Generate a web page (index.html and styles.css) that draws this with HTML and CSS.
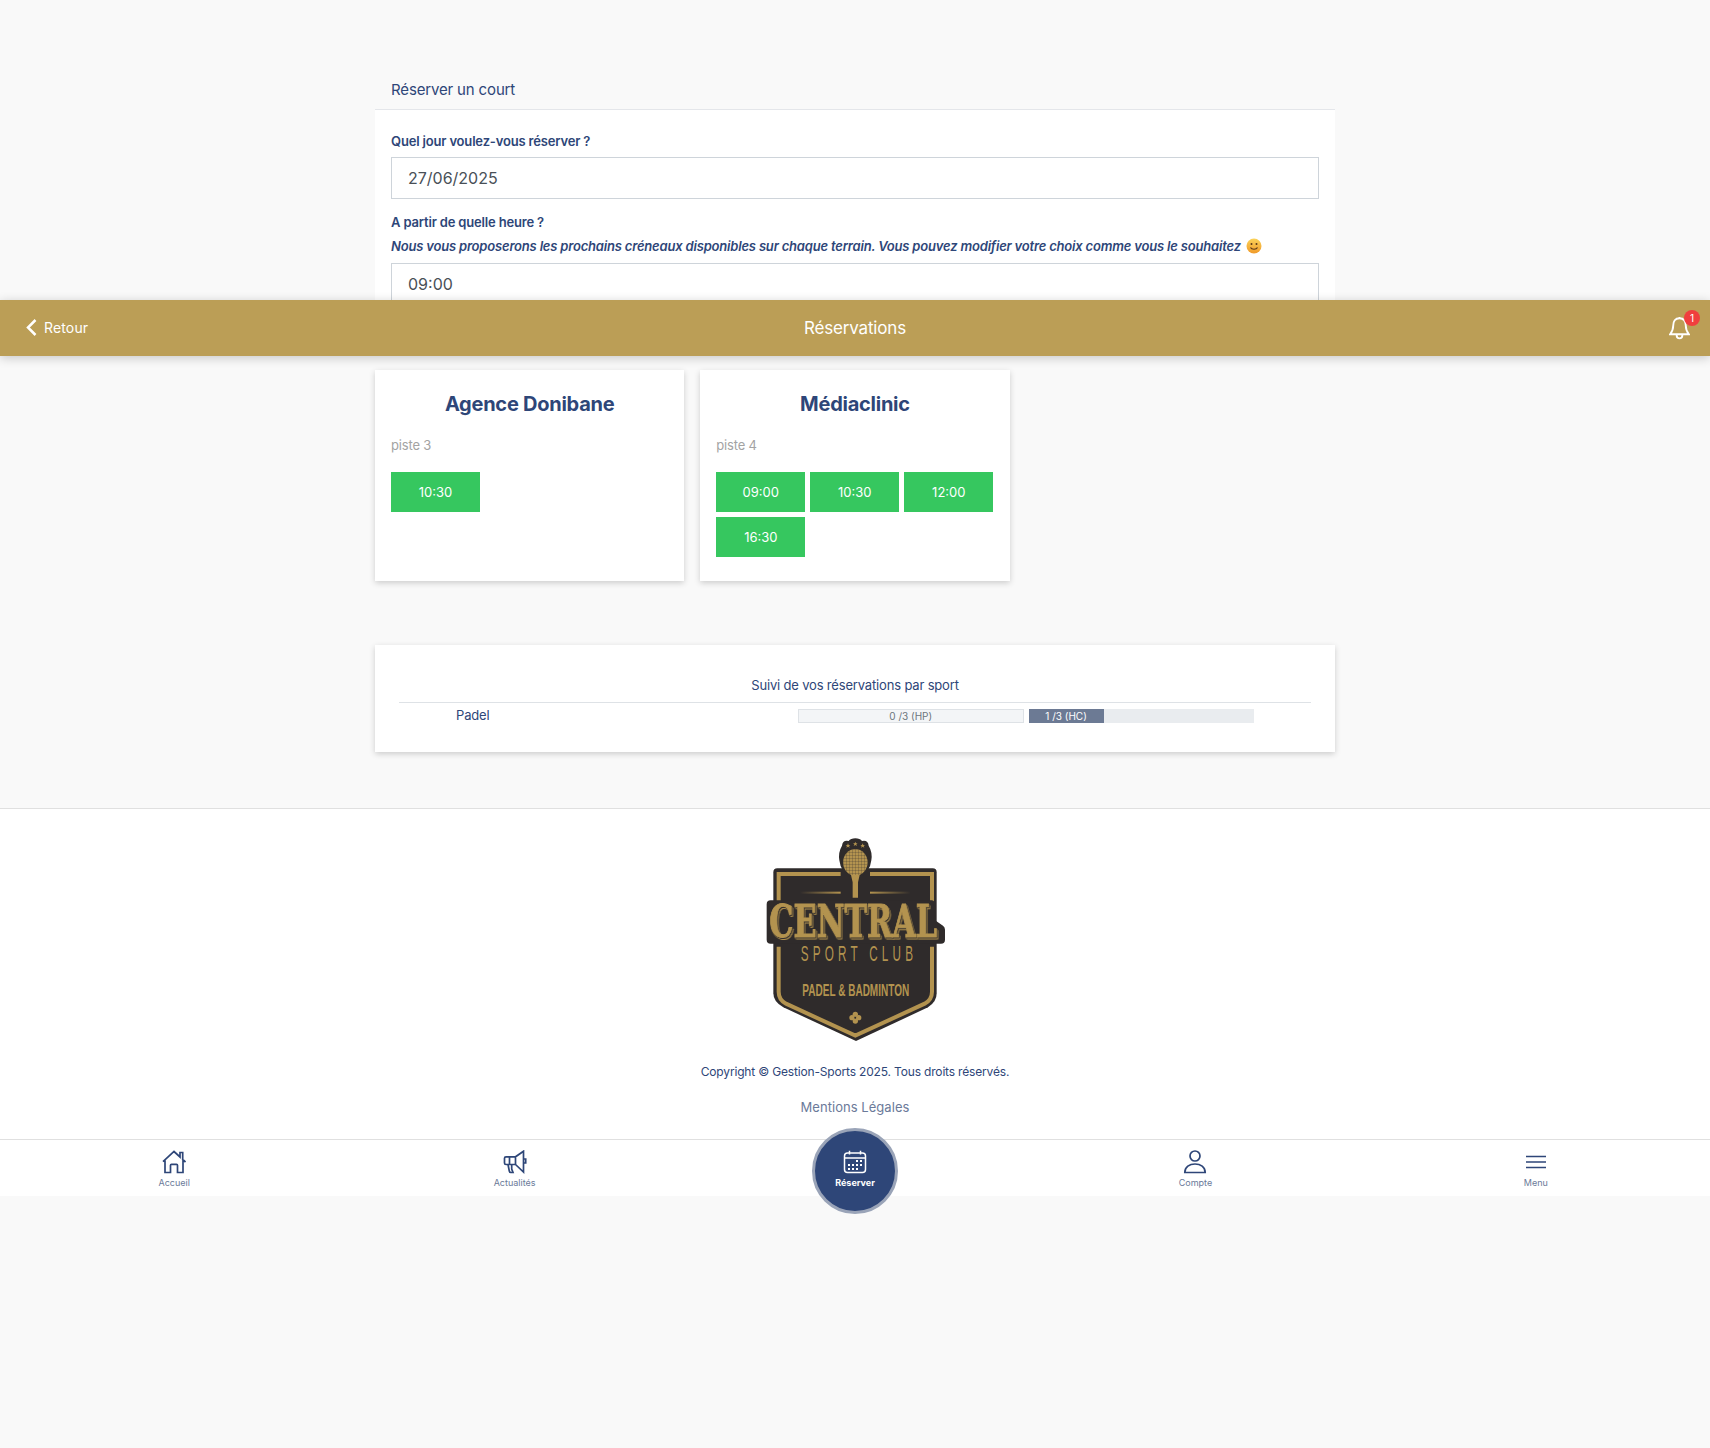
FILE: index.html
```html
<!DOCTYPE html>
<html lang="fr">
<head>
<meta charset="utf-8">
<title>Réservations</title>
<link rel="stylesheet" href="styles.css">
</head>
<body>
<header class="topbar">
  <a class="back"><svg class="chevron" viewBox="0 0 11 17"><path d="M9.500 1 2 8.500 9.500 16"/></svg><span>Retour</span></a>
  <div class="topbar-title">Réservations</div>
  <div class="bell">
    <svg class="bell-icon" viewBox="0 0 20 23"><path d="M10 2.200C5.800 2.200 4 5.200 4 9.200c0 3.800-1 5.900-3 8.300h18c-2-2.400-3-4.500-3-8.300 0-4-1.800-7-6-7ZM10 1v1.200M7.300 17.500v1.300a2.700 2.700 0 0 0 5.400 0v-1.300"/></svg>
    <span class="badge">1</span>
  </div>
</header>

<main class="container">
  <section class="booking">
    <h2 class="booking-head">Réserver un court</h2>
    <div class="booking-form">
      <label class="field-label">Quel jour voulez-vous réserver ?</label>
      <div class="field-input">27/06/2025</div>
      <label class="field-label field-label-second">A partir de quelle heure ?</label>
      <p class="field-hint">Nous vous proposerons les prochains créneaux disponibles sur chaque terrain. Vous pouvez modifier votre choix comme vous le souhaitez
        <svg class="smiley" viewBox="0 0 16 16"><defs><linearGradient id="sm" x1="0" y1="0" x2="0" y2="1"><stop offset="0" stop-color="#fbd35a"/><stop offset="1" stop-color="#f09a2a"/></linearGradient></defs><circle cx="8" cy="8" r="7.500" fill="url(#sm)"/><circle cx="5.500" cy="6" r="1" fill="#5b3a1a"/><circle cx="10.500" cy="6" r="1" fill="#5b3a1a"/><path d="M4.500 9.500c1 2.300 6 2.300 7 0" fill="none" stroke="#5b3a1a" stroke-width="1.100"/></svg></p>
      <div class="field-input">09:00</div>
    </div>
  </section>

  <section class="courts">
    <article class="court">
      <h3 class="court-name">Agence Donibane</h3>
      <p class="court-sub">piste 3</p>
      <div class="slots">
        <a class="slot">10:30</a>
      </div>
    </article>
    <article class="court">
      <h3 class="court-name">Médiaclinic</h3>
      <p class="court-sub">piste 4</p>
      <div class="slots">
        <a class="slot">09:00</a>
        <a class="slot">10:30</a>
        <a class="slot">12:00</a>
        <a class="slot">16:30</a>
      </div>
    </article>
  </section>

  <section class="tracking">
    <h4 class="tracking-title">Suivi de vos réservations par sport</h4>
    <div class="tracking-row">
      <div class="tracking-sport">Padel</div>
      <div class="bar bar-empty">0 /3 (HP)</div>
      <div class="bar bar-track"><div class="bar-fill">1 /3 (HC)</div></div>
    </div>
  </section>
</main>

<footer class="footer">
  <svg class="logo" viewBox="0 0 630 675" role="img" aria-label="Central Sport Club">
    <defs>
      <linearGradient id="fadeL" x1="0" y1="0" x2="1" y2="0"><stop offset="0" stop-color="#b3934f" stop-opacity="0"/><stop offset="1" stop-color="#b3934f"/></linearGradient>
      <linearGradient id="fadeR" x1="0" y1="0" x2="1" y2="0"><stop offset="0" stop-color="#b3934f"/><stop offset="1" stop-color="#b3934f" stop-opacity="0"/></linearGradient>
      <pattern id="net" width="9" height="9" patternUnits="userSpaceOnUse"><path d="M0 0H9M0 0V9" stroke="#2f2b2b" stroke-width="1.400"/></pattern>
    </defs>
    <path class="lg-dark" d="M82 130H548q12 0 12 12V505q0 26-26 42L318 648 100 547q-30-16-30-42V142q0-12 12-12Z"/>
    <path class="lg-line" d="M272 147H86V232M86 365V500q0 24 22 36L316 632 524 536q22-12 22-36V365M546 232V147H360"/>
    <rect class="lg-fade" x="150" y="200" width="122" height="6" fill="url(#fadeL)"/>
    <rect class="lg-fade" x="360" y="200" width="122" height="6" fill="url(#fadeR)"/>
    <path class="lg-dark" d="M316 40q14 0 20 8 18-4 20 14 12 20 8 44-4 36-36 52v62h-24v-62q-32-16-36-52-4-24 8-44 2-18 20-14 6-8 20-8Z"/>
    <ellipse class="lg-gold" cx="316" cy="112" rx="37" ry="40"/>
    <ellipse cx="316" cy="112" rx="37" ry="40" fill="url(#net)"/>
    <path class="lg-gold" d="M303 150h26l-5 22v46h-16v-46Z"/>
    <path class="lg-star" d="M294 55l2 5h5l-4 3 2 5-5-3-5 3 2-5-4-3h5ZM316 50l2 5h5l-4 3 2 5-5-3-5 3 2-5-4-3h5ZM338 55l2 5h5l-4 3 2 5-5-3-5 3 2-5-4-3h5Z"/>
    <path class="lg-dark" d="M62 226H545q8 0 8 8v50l26 18q6 4 6 12v30q0 12-12 12H62q-12 0-12-12V238q0-12 12-12Z"/>
    <text class="lg-central" transform="translate(58 336) scale(.67 1)">CENTRAL</text>
    <text class="lg-sport" transform="translate(152 407) scale(.55 1)">SPORT CLUB</text>
    <text class="lg-padel" transform="translate(157 512) scale(.64 1)">PADEL &amp; BADMINTON</text>
    <g class="lg-star"><circle cx="316" cy="568" r="8"/><circle cx="326" cy="578" r="8"/><circle cx="316" cy="588" r="8"/><circle cx="306" cy="578" r="8"/></g>
    <circle class="lg-dark" cx="316" cy="578" r="2.500"/>
  </svg>
  <p class="copyright">Copyright © Gestion-Sports 2025. Tous droits réservés.</p>
  <p class="legal">Mentions Légales</p>
</footer>

<nav class="tabbar">
  <a class="tab">
    <svg class="tab-icon" viewBox="0 0 24 24"><path d="M1 11.700 12 1.500l6 5.500V2.500h2.700v7l2.800 2.500M3 10.500v12h5.500V15.300q0-1 1-1h5q1 0 1 1v7.200h5.500v-12"/></svg>
    <span>Accueil</span>
  </a>
  <a class="tab">
    <svg class="tab-icon" viewBox="0 0 24 24"><path d="M20.500 1.200 12.500 6.800H3Q1.500 6.800 1.500 8.300v4.700q0 1.500 1.500 1.500h9.500l8 7.500ZM12.500 6.800v7.700M6.500 6.800v7.700M5 14.500l1.300 6.500q.3 1.500 1.500 1.500H10l-1.300-3.500v-4.500M20.700 9h2v4h-2"/></svg>
    <span>Actualités</span>
  </a>
  <a class="tab tab-main">
    <span class="tab-circle">
      <svg class="tab-icon tab-icon-light" viewBox="0 0 24 24"><rect x="1.500" y="3" width="21" height="19.500" rx="3"/><path d="M1.500 8h21M6.500 .8V4.500M17.500 .8V4.500"/><path class="dots" d="M13 10h2v2h-2zM17 10h2v2h-2zM5 14h2v2H5zM9 14h2v2H9zM13 14h2v2h-2zM17 14h2v2h-2zM5 18h2v2H5zM9 18h2v2H9zM13 18h2v2h-2z"/></svg>
      <span>Réserver</span>
    </span>
  </a>
  <a class="tab">
    <svg class="tab-icon" viewBox="0 0 24 24"><circle cx="12" cy="6" r="5"/><path d="M1.800 22.500C1.800 17 6.500 14 12 14s10.200 3 10.200 8.500Z"/></svg>
    <span>Compte</span>
  </a>
  <a class="tab">
    <svg class="tab-icon" viewBox="0 0 24 24"><path d="M2 6.500h20M2 12h20M2 17.500h20"/></svg>
    <span>Menu</span>
  </a>
</nav>
</body>
</html>
```
FILE: styles.css
```css
* { box-sizing: border-box; }
html, body { margin: 0; padding: 0; }
body {
  position: relative;
  min-height: 1448px;
  background: #f9f9f9;
  font-family: Inter, "Noto Sans", sans-serif;
  color: #2e4678;
  letter-spacing: -.17px;
  overflow: hidden;
}
h2, h3, h4, p { margin: 0; }

/* top bar lies over the scrolled content */
.topbar {
  position: absolute;
  top: 300px;
  left: 0;
  right: 0;
  z-index: 5;
  height: 56px;
  background: #bb9e56;
  box-shadow: 0 2px 10px rgba(0, 0, 0, .2);
  display: flex;
  align-items: center;
  justify-content: center;
  color: #fff;
}
.back {
  position: absolute;
  left: 26px;
  top: 19px;
  display: flex;
  align-items: center;
  gap: 7px;
  font-size: 14px;
  line-height: 16px;
  letter-spacing: .15px;
}
.chevron { width: 11px; height: 17px; fill: none; stroke: #fff; stroke-width: 2.500; }
.topbar-title { font-size: 17px; font-weight: 400; }
.bell { position: absolute; left: 1669px; top: 16px; width: 21px; height: 24px; }
.bell-icon { width: 21px; height: 24px; fill: none; stroke: #fff; stroke-width: 1.800; display: block; }
.badge {
  position: absolute;
  left: 15px;
  top: -6px;
  width: 16px;
  height: 16px;
  border-radius: 50%;
  background: #f03e3e;
  color: #fff;
  font-size: 10px;
  line-height: 16px;
  text-align: center;
}

.container { width: 960px; margin: 0 auto; padding-top: 60px; }

.booking { height: 296px; overflow: hidden; }
.booking-head {
  height: 50px;
  padding: 20px 16px 0;
  border-bottom: 1px solid #e4e6ea;
  font-size: 15px;
  font-weight: 400;
  line-height: 19px;
  letter-spacing: -.15px;
}
.booking-form { height: 246px; background: #fff; padding: 22px 16px 0; }
.field-label { display: block; font-size: 13px; font-weight: 600; line-height: 19px; }
.field-label-second { margin-top: 14px; }
.field-input {
  height: 42px;
  margin-top: 6px;
  border: 1px solid #ced4da;
  padding: 0 16px;
  font-size: 16px;
  line-height: 40px;
  letter-spacing: 0;
  color: #495057;
  background: #fff;
}
.field-hint { margin-top: 5px; margin-bottom: 7px; font-size: 13px; font-weight: 600; font-style: italic; line-height: 19px; letter-spacing: -.185px; white-space: nowrap; }
.smiley { width: 16px; height: 16px; vertical-align: -3px; margin-left: 2px; }

.courts { display: flex; gap: 16px; margin-top: 14px; }
.court {
  width: 309.300px;
  min-height: 211px;
  background: #fff;
  padding: 22px 16px 24px;
  box-shadow: 0 2px 6px rgba(0, 0, 0, .18);
}
.court-name { font-size: 20px; font-weight: 700; line-height: 24px; letter-spacing: -.25px; text-align: center; }
.court-sub { margin-top: 19px; font-size: 13px; line-height: 20px; color: #a3a3a3; }
.slots { display: grid; grid-template-columns: repeat(3, 89px); gap: 5px; margin-top: 17px; }
.slot {
  height: 40px;
  background: #36c75f;
  color: #fff;
  font-size: 13px;
  font-weight: 400;
  line-height: 40px;
  letter-spacing: 0;
  text-align: center;
}

.tracking {
  margin-top: 64px;
  height: 107px;
  background: #fff;
  padding: 30px 24px 0;
  box-shadow: 0 2px 6px rgba(0, 0, 0, .18);
}
.tracking-title {
  height: 28px;
  border-bottom: 1px solid #dee2e6;
  font-size: 13px;
  font-weight: 400;
  line-height: 20px;
  text-align: center;
}
.tracking-row { display: flex; align-items: flex-start; gap: 5px; padding-top: 6px; }
.tracking-sport { width: 394px; padding-left: 57px; font-size: 13px; line-height: 13px; }
.bar { width: 225.500px; height: 14px; font-size: 10px; line-height: 14px; letter-spacing: 0; text-align: center; }
.bar-empty { background: #f3f5f7; border: 1px solid #dee2e6; line-height: 12px; color: #6c757d; }
.bar-track { background: #e9ecef; }
.bar-fill { width: 33.300%; height: 14px; background: #6c7a94; color: #fff; }

.footer {
  margin-top: 56px;
  height: 331px;
  border-top: 1px solid #e0e0e0;
  background: #fff;
  padding-top: 16px;
  text-align: center;
}
.logo { display: block; width: 210px; height: 225px; margin: 0 auto; }
.lg-dark { fill: #2f2b2b; }
.lg-gold, .lg-star { fill: #b3934f; }
.lg-line { fill: none; stroke: #b3934f; stroke-width: 12; }
.lg-central {
  font-family: "DejaVu Serif", serif;
  font-weight: 700;
  font-size: 136px;
  letter-spacing: 0;
  fill: #b3934f;
  stroke: #b3934f;
  stroke-width: 3;
  filter: drop-shadow(3px 3px 0 #2f2b2b) drop-shadow(3px 3px 0 #b3934f);
}
.lg-sport { font-family: "Liberation Sans", sans-serif; font-size: 64px; letter-spacing: 23px; fill: #b3934f; }
.lg-padel { font-family: "Liberation Sans", sans-serif; font-weight: 700; font-size: 47px; letter-spacing: 0; fill: #b3934f; }
.copyright { margin-top: 12px; font-size: 12px; line-height: 20px; }
.legal { margin-top: 15px; font-size: 13px; line-height: 20px; letter-spacing: .04px; color: #6b7a99; }

.tabbar {
  display: flex;
  height: 57px;
  padding: 0 4px;
  border-top: 1px solid #e0e0e0;
  background: #fff;
}
.tab {
  flex: 1;
  position: relative;
  padding-top: 10px;
  display: flex;
  flex-direction: column;
  align-items: center;
  gap: 3px;
  font-size: 9px;
  line-height: 12px;
  letter-spacing: 0;
  color: #6b7a99;
}
.tab-icon { width: 24px; height: 24px; fill: none; stroke: #2e4678; stroke-width: 1.700; display: block; }
.tab-circle {
  position: absolute;
  top: -12px;
  left: 50%;
  margin-left: -43px;
  z-index: 3;
  width: 86px;
  height: 86px;
  border-radius: 50%;
  border: 3px solid #9aa4b8;
  background: #2e4678;
  color: #fff;
  font-weight: 700;
  padding-top: 19px;
  display: flex;
  flex-direction: column;
  align-items: center;
  gap: 3px;
}
.tab-icon-light { stroke: #fff; stroke-width: 1.500; }
.dots { fill: #fff; stroke: none; }
```
